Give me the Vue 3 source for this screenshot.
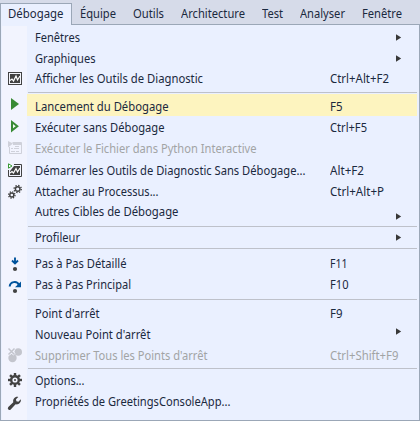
<script setup>
const tabs = [
  { label: 'Débogage', x: 8, w: 55.5, active: true },
  { label: 'Équipe', x: 80, w: 36 },
  { label: 'Outils', x: 133, w: 31 },
  { label: 'Architecture', x: 181, w: 64 },
  { label: 'Test', x: 262, w: 21 },
  { label: 'Analyser', x: 300, w: 45 },
  { label: 'Fenêtre', x: 362, w: 40 },
].map((t, i, all) => ({
  ...t,
  gap: i < 2 ? 8 : t.x - all[i - 1].x - all[i - 1].w,
}))

// h: row height, w / kw: label and shortcut widths, arrow: vertical offset of the submenu arrow
const groups = [
  [
    { label: 'Fenêtres', w: 45, h: 21, arrow: 8 },
    { label: 'Graphiques', w: 60.5, h: 20, arrow: 8 },
    { label: 'Afficher les Outils de Diagnostic', w: 168, h: 21, key: 'Ctrl+Alt+F2', kw: 59, icon: 'chart' },
  ],
  [
    { label: 'Lancement du Débogage', w: 133.5, h: 22, key: 'F5', kw: 12.5, icon: 'play', hot: true },
    { label: 'Exécuter sans Débogage', w: 129.5, h: 21, key: 'Ctrl+F5', kw: 37, icon: 'outline' },
    { label: 'Exécuter le Fichier dans Python Interactive', w: 221.5, h: 22, icon: 'python', off: true },
    { label: 'Démarrer les Outils de Diagnostic Sans Débogage...', w: 270.5, h: 21, key: 'Alt+F2', kw: 34, icon: 'chartplay' },
    { label: 'Attacher au Processus...', w: 123.5, h: 20, key: 'Ctrl+Alt+P', kw: 54, icon: 'gears' },
    { label: 'Autres Cibles de Débogage', w: 143.5, h: 21, arrow: 13 },
  ],
  [{ label: 'Profileur', w: 45, h: 21, arrow: 8 }],
  [
    { label: 'Pas à Pas Détaillé', w: 91.5, h: 21, key: 'F11', kw: 17.5, icon: 'into' },
    { label: 'Pas à Pas Principal', w: 96, h: 21, key: 'F10', kw: 18.5, icon: 'over' },
  ],
  [
    { label: "Point d'arrêt", w: 64.5, h: 21, key: 'F9', kw: 12.5 },
    { label: "Nouveau Point d'arrêt", w: 115.5, h: 21, arrow: 5 },
    { label: "Supprimer Tous les Points d'arrêt", w: 172.5, h: 21, key: 'Ctrl+Shift+F9', kw: 68.5, icon: 'clear', off: true },
  ],
  [
    { label: 'Options...', w: 49.5, h: 21, icon: 'gear' },
    { label: 'Propriétés de GreetingsConsoleApp...', w: 195.5, h: 21, icon: 'wrench' },
  ],
]

// Condenses the glyphs of a label to the width it is given
const vFit = {
  mounted(el, { value }) {
    const natural = el.getBoundingClientRect().width
    el.style.width = `${value}px`
    el.style.transform = `scaleX(${value / natural})`
  },
}
const teeth = [0, 45, 90, 135, 180, 225, 270, 315]
</script>

<template>
  <div class="window">
    <nav class="bar">
      <div v-for="t in tabs" :key="t.label" class="tab" :class="{ active: t.active }" :style="{ paddingLeft: t.gap + 'px' }">
        <span class="text" v-fit="t.w">{{ t.label }}</span>
      </div>
    </nav>
    <div class="menu">
      <div v-for="(g, gi) in groups" :key="gi" class="group" :class="'g' + gi">
        <div v-for="r in g" :key="r.label" class="row" :class="{ hot: r.hot, off: r.off }" :style="{ height: r.h + 'px' }">
          <div class="icon">
            <svg v-if="r.icon" width="18" height="22" viewBox="6 0 18 22">
              <g v-if="r.icon === 'chart'">
                <rect x="8.5" y="5.5" width="13" height="12" fill="#f3f4fa" stroke="#424242" />
                <rect x="10" y="7" width="10" height="9" fill="#424242" />
                <path d="M10 13.5l2-1.5 1.5 2 2.5-5 1.5 4 2.5-4" fill="none" stroke="#fff" stroke-width="1.2" />
              </g>
              <path v-else-if="r.icon === 'play'" d="M11 4v12l8-6z" fill="#388a34" />
              <path v-else-if="r.icon === 'outline'" d="M12 6v8.4l5.3-4.2z" fill="#f4fff4" stroke="#388a34" stroke-width="2" />
              <g v-else-if="r.icon === 'python'" fill="none" stroke="#cfd1da">
                <path d="M8 4l5 2.5-5 4z" fill="#cfd1da" stroke="none" />
                <path d="M9.5 10v6.5h12v-11h-9" />
                <path d="M13 7h8" stroke-width="2" />
                <path d="M11 11.5h2M15 9.5h4M14 11.5h5M11 14.5h4M16 14.5h3" />
              </g>
              <g v-else-if="r.icon === 'chartplay'">
                <path d="M14 5.5h7.5v12h-13V11" fill="none" stroke="#424242" />
                <path d="M14 7h6v9H10v-4z" fill="#424242" />
                <path d="M10 14l2-1.5 1.5 1.5 2.5-4.5 1.5 3.5 2.5-4" fill="none" stroke="#fff" stroke-width="1.2" />
                <path d="M8.5 4.8v4.4l3.5-2.2z" fill="#fff" stroke="#389a34" />
              </g>
              <g v-else-if="r.icon === 'gears'" fill="none" stroke="#424242">
                <circle cx="17.7" cy="9" r="2.3" stroke-width="1.4" />
                <circle cx="17.7" cy="9" r="3.6" stroke-width="1.3" stroke-dasharray="1.4 1.43" />
                <circle cx="11.8" cy="15" r="2" stroke-width="1.4" />
                <circle cx="11.8" cy="15" r="3.2" stroke-width="1.3" stroke-dasharray="1.25 1.26" />
              </g>
              <g v-else-if="r.icon === 'into'">
                <path d="M15 5.5v6M12 8.5l3 3 3-3" fill="none" stroke="#00539c" stroke-width="1.9" />
                <circle cx="15" cy="17" r="2.1" fill="#424242" />
              </g>
              <g v-else-if="r.icon === 'over'">
                <path d="M9.7 13.5c.3-5 7.3-6.2 9.3-1.5" fill="none" stroke="#00539c" stroke-width="2" />
                <path d="M21 8.5v5.8h-6z" fill="#00539c" />
                <circle cx="15" cy="18" r="2.1" fill="#424242" />
              </g>
              <g v-else-if="r.icon === 'clear'" fill="#c3c5cd">
                <circle cx="18.2" cy="8" r="3.8" />
                <circle cx="12.5" cy="14" r="4.2" />
                <path d="M8.5 4.5l6 6M14.5 4.5l-6 6" stroke="#f2f4fe" stroke-width="3" />
                <path d="M8.5 4.5l6 6M14.5 4.5l-6 6" stroke="#c3c5cd" stroke-width="1.5" />
              </g>
              <g v-else-if="r.icon === 'gear'" fill="none" stroke="#424242">
                <circle cx="15" cy="11" r="3.8" stroke-width="2.4" />
                <path v-for="a in teeth" :key="a" d="M15 4v3" stroke-width="2.4" :transform="`rotate(${a} 15 11)`" />
                <circle cx="15" cy="11" r="1" fill="#424242" stroke="none" />
              </g>
              <path v-else d="M8.6 19.7a1.8 1.8 0 0 1-.3-2.6l5-4.9c-.8-3.2 1.8-6 5-5.3l-2.3 2.3.4 2 2 .5 2.4-2.4c.7 3.1-2.2 5.8-5.2 5l-4.9 5.1a1.6 1.6 0 0 1-2.1.3z" fill="#424242" />
            </svg>
          </div>
          <div class="label"><span class="text" v-fit="r.w">{{ r.label }}</span></div>
          <div class="key"><span v-if="r.key" class="text" v-fit="r.kw">{{ r.key }}</span></div>
          <div class="more">
            <svg v-if="r.arrow" :style="{ marginTop: r.arrow + 'px' }" width="6" height="7" viewBox="0 0 6 7"><path d="M0 0.3v6.4L5.2 3.5z" fill="#383838" /></svg>
          </div>
        </div>
      </div>
    </div>
  </div>
</template>

<style scoped>
.window {
  box-sizing: border-box;
  width: 420px;
  height: 421px;
  display: flex;
  flex-direction: column;
  background: #d6dbe9;
  color: #1b293e;
  font: 12px/21px "Noto Sans", "Open Sans", sans-serif;
  white-space: nowrap;
  overflow: hidden;
}
.text {
  display: inline-block;
  transform-origin: 0 50%;
  vertical-align: top;
}
.bar {
  display: flex;
  height: 25px;
  flex: none;
  box-sizing: border-box;
  padding-top: 3px;
  background: linear-gradient(#9ba7b7, #9ba7b7) 0 24px / 100% 1px no-repeat;
}
.tab {
  box-sizing: border-box;
  height: 22px;
}
.tab.active {
  width: 72px;
  padding-left: 7px !important;
  border: 1px solid #9ba7b7;
  border-bottom: 0;
  background: #eaf0ff;
  line-height: 19px;
}
.menu {
  flex: 1;
  box-sizing: border-box;
  border: 1px solid #9ba7b7;
  border-top: 0;
  padding: 1px 1px 0 0;
  background: linear-gradient(#f2f4fe, #f2f4fe) 1px 1px / 25px 100% no-repeat #eaf0ff;
}
.group {
  box-sizing: border-box;
  background: linear-gradient(#bec1ca, #bec1ca) 27px 0 / 389px 1px no-repeat;
}
.g0 { height: 66px; background: none; }
.g1 { height: 134px; padding-top: 2px; }
.g2 { height: 22px; }
.g3 { height: 51px; padding-top: 4px; }
.g4 { height: 69px; padding-top: 3px; }
.g5 { padding-top: 1px; }
.row {
  display: grid;
  grid-template-columns: 26px 302px 66px 23px;
}
.icon { padding-left: 5px; }
.icon svg, .more svg { display: block; }
.label { padding: 1px 0 0 7.5px; }
.key { padding: 1px 0 0 0.5px; }
.more { padding-left: 1px; }
.hot {
  background: linear-gradient(#fdf4bf, #fdf4bf) 26px 0 / 390px 100% no-repeat;
}
.hot .label, .hot .key { padding-top: 2px; }
.off { color: #a2a4a5; }
</style>
